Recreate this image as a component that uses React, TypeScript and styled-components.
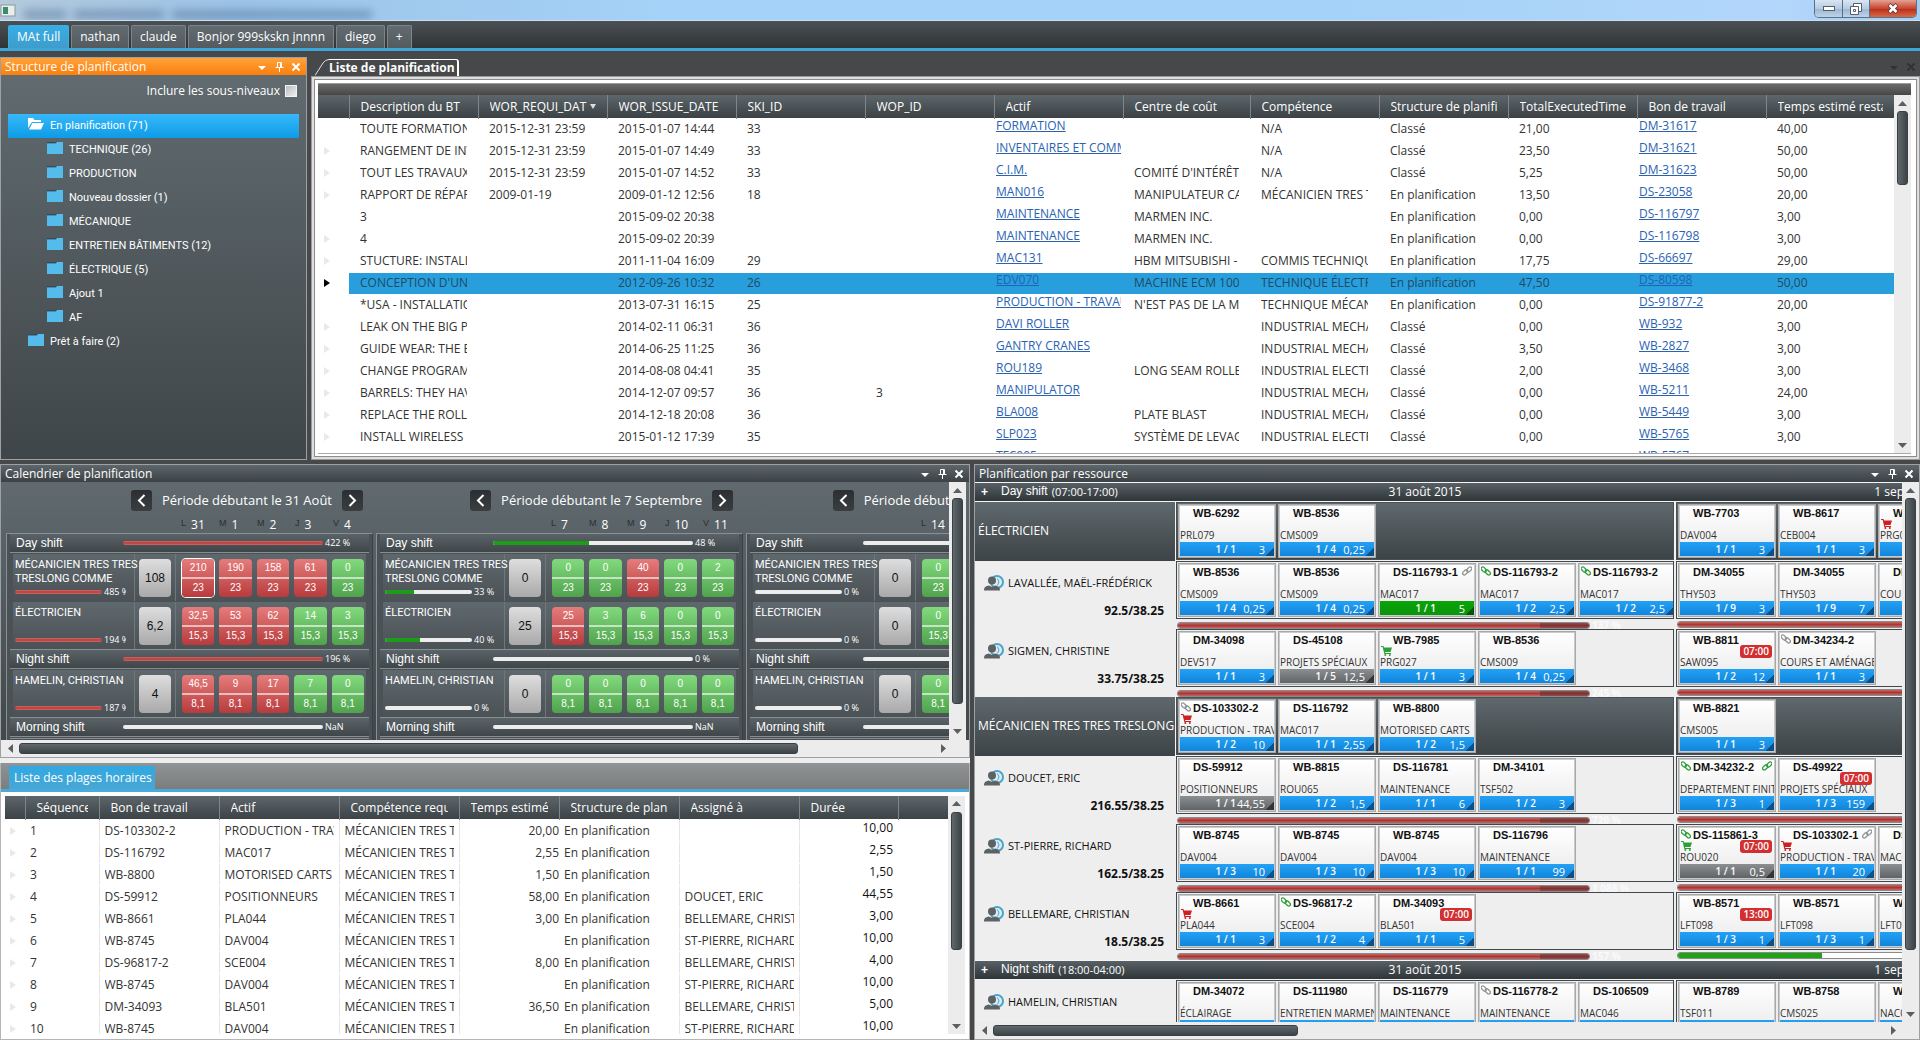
import React from "react";
import styled, { createGlobalStyle, css } from "styled-components";

const ui = `"Open Sans", "Noto Sans", sans-serif`;
const arial = `"Liberation Sans", Arial, sans-serif`;
const compact = `Roboto, "Liberation Sans", sans-serif`;
const steel = "linear-gradient(#5d666b, #3b4144)";
const steelDeep = "linear-gradient(#586166, #2f3538)";

const Global = createGlobalStyle`
  *, *::before, *::after { box-sizing: border-box; }
  body { margin: 0; background: #464849; font: 12px/16px ${ui}; color: #333; }
  button { font: inherit; color: inherit; border: 0; padding: 0; background: none; }
  h1, h2, p, ul { margin: 0; padding: 0; font: inherit; }
  ul { list-style: none; }
`;

const Page = styled.div`
  display: flex;
  flex-direction: column;
  height: 100vh;
  overflow: hidden;
`;

/* ---------- window chrome ---------- */

const TitleBar = styled.header`
  flex: none;
  display: flex;
  align-items: flex-start;
  gap: 8px;
  height: 21px;
  padding-right: 3px;
  overflow: hidden;
  background: linear-gradient(90deg, #b4c9dc 0, #9cc3e6 12%, #a5d2f8 35%, #a5d2f8 70%, #b3d6fb 93%, #a4cdf3 100%);
  border-bottom: 1px solid #c9dff0;
`;
const Haze = styled.i<{ $w: number }>`
  width: ${(p) => p.$w}px;
  height: 9px;
  margin-top: 10px;
  background: #44658c;
  opacity: 0.45;
  filter: blur(4px);
`;
const WindowButtons = styled.div`
  display: flex;
  height: 18px;
  margin-left: auto;
  border: 1px solid #5d6f84;
  border-top: 0;
  border-radius: 0 0 5px 5px;
  overflow: hidden;
`;
const WindowButton = styled.button<{ $close?: boolean }>`
  display: grid;
  place-items: center;
  width: ${(p) => (p.$close ? 47 : 27)}px;
  background: ${(p) =>
    p.$close ? "linear-gradient(#e3a294, #c9452e 50%, #b9311b 55%, #d8694c)" : "linear-gradient(#d9e6f3, #b4cbe2 50%, #9db8d4 55%, #bcd3ea)"};
  & + & { border-left: 1px solid #5d6f84; }
`;

const WorkTabs = styled.nav`
  flex: none;
  display: flex;
  align-items: flex-end;
  gap: 2px;
  height: 30px;
  padding-left: 8px;
  background: linear-gradient(#4a5054, #303436);
  border-bottom: 3px solid #3ea6d6;
`;
const WorkTab = styled.button<{ $active?: boolean }>`
  height: 23px;
  padding: 0 8px;
  color: #fff;
  border: 1px solid ${(p) => (p.$active ? "#37b0e6" : "#7d8589")};
  border-bottom: 0;
  border-radius: 2px 2px 0 0;
  background: ${(p) => (p.$active ? "linear-gradient(#37aee6, #3f9ccb)" : "linear-gradient(#626b70, #535b5f)")};
`;

/* ---------- docking frame ---------- */

const Dock = styled.main`
  flex: 1;
  min-height: 0;
  display: grid;
  grid-template-rows: minmax(0, 403fr) minmax(0, 576fr);
  gap: 4px;
  padding-top: 6px;
`;
const TopRow = styled.div`
  display: grid;
  grid-template-columns: 307px minmax(0, 1fr);
  gap: 4px;
  min-height: 0;
`;
const BottomRow = styled.div`
  display: grid;
  grid-template-columns: minmax(0, 970fr) minmax(0, 946fr);
  gap: 4px;
  min-height: 0;
`;
const Column = styled.div`
  display: flex;
  flex-direction: column;
  min-height: 0;
  background: #eee;
`;
const Panel = styled.section<{ $light?: boolean }>`
  display: flex;
  flex-direction: column;
  min-height: 0;
  min-width: 0;
  border: 1px solid #9da1a3;
  background: ${(p) => (p.$light ? "#eee" : "linear-gradient(#626c71, #3f4649)")};
`;
const PanelTitle = styled.header<{ $active?: boolean }>`
  flex: none;
  display: flex;
  align-items: center;
  height: 17px;
  padding: 0 5px 0 4px;
  color: #fff;
  background: ${(p) => (p.$active ? "linear-gradient(#ffa23c, #fb7f0b)" : steel)};
`;
const PanelTools = styled.div`
  display: flex;
  align-items: center;
  gap: 7px;
  margin-left: auto;
`;
const Tool = styled.button<{ $dim?: boolean }>`
  display: grid;
  place-items: center;
  width: 10px;
  height: 14px;
  color: ${(p) => (p.$dim ? "#303334" : "#fff")};
`;

const DownIcon = () => (
  <svg width="10" height="10" viewBox="0 0 10 10" aria-hidden="true"><path d="M1 4h8L5 8z" fill="currentColor" /></svg>
);
const PinIcon = () => (
  <svg width="9" height="12" viewBox="0 0 9 12" fill="none" stroke="currentColor" aria-hidden="true">
    <path d="M2.500 6.500V1.500h4v5M5.500 1.500v5M.5 6.500h8M4.500 6.500V11" />
  </svg>
);
const CrossIcon = () => (
  <svg width="10" height="10" viewBox="0 0 10 10" stroke="currentColor" strokeWidth="2" aria-hidden="true">
    <path d="M1.500 1.500l7 7M8.500 1.500l-7 7" />
  </svg>
);

const Tools = () => (
  <PanelTools>
    <Tool aria-label="Options"><DownIcon /></Tool>
    <Tool aria-label="Épingler"><PinIcon /></Tool>
    <Tool aria-label="Fermer"><CrossIcon /></Tool>
  </PanelTools>
);

/* ---------- scrollbars ---------- */

const Bar = styled.div<{ $across?: boolean }>`
  flex: none;
  display: flex;
  flex-direction: ${(p) => (p.$across ? "row" : "column")};
  ${(p) => (p.$across ? "height: 17px; gap: 3px; padding: 3px 20px 3px 4px;" : "width: 17px; padding: 0 3px;")}
  background: #ececec;
`;
const BarArrow = styled.button<{ $dir: number }>`
  flex: none;
  display: grid;
  place-items: center;
  align-self: center;
  width: 11px;
  height: 16px;
  color: #5b5f61;
  svg { transform: rotate(${(p) => p.$dir}deg); }
`;
const Thumb = styled.div<{ $size: number; $across?: boolean }>`
  flex: ${(p) => p.$size} 1 0;
  border: 1px solid #3a4043;
  border-radius: 3px;
  background: linear-gradient(${(p) => (p.$across ? "180deg" : "90deg")}, #5f686c, #3d4447);
`;
const Rest = styled.div<{ $size: number }>`
  flex: ${(p) => p.$size} 1 0;
`;
const ArrowHead = () => (
  <svg width="9" height="5" viewBox="0 0 9 5" aria-hidden="true"><path d="M0 5L4.500 0 9 5z" fill="currentColor" /></svg>
);
const Scroll = ({ size, rest, across }: { size: number; rest: number; across?: boolean }) => (
  <Bar $across={across}>
    <BarArrow $dir={across ? -90 : 0} aria-label="Reculer"><ArrowHead /></BarArrow>
    <Thumb $size={size} $across={across} />
    <Rest $size={rest} />
    <BarArrow $dir={across ? 90 : 180} aria-label="Avancer"><ArrowHead /></BarArrow>
  </Bar>
);

/* ---------- folder tree ---------- */

const SubLevels = styled.label`
  display: flex;
  justify-content: flex-end;
  align-items: center;
  gap: 5px;
  height: 32px;
  margin-bottom: 7px;
  padding-right: 9px;
  color: #fff;
`;
const Check = styled.input`
  appearance: none;
  width: 12px;
  height: 12px;
  margin: 0;
  border: 1px solid #f4f4f4;
  background: linear-gradient(135deg, #b9bdbf, #f0f0f0);
`;
const Tree = styled.ul`
  padding: 0 7px;
  font: 11px/24px ${compact};
  color: #fff;
`;
const Node = styled.li<{ $level: number; $open?: boolean }>`
  display: flex;
  align-items: center;
  gap: 6px;
  height: 24px;
  padding-left: ${(p) => 1 + p.$level * 19}px;
  ${(p) => p.$open && css`background: linear-gradient(#38b8fb, #0d9ce6);`}
  svg { margin-bottom: 5px; }
`;
const Folder = () => (
  <svg width="16" height="13" viewBox="0 0 16 13" aria-hidden="true">
    <path d="M0 2.500h9l1-1.500h6v12H0z" fill="#53bcec" />
    <path d="M0 1.500h8l1-1" stroke="#2c4b5c" fill="none" />
  </svg>
);
const OpenFolder = () => (
  <svg width="16" height="13" viewBox="0 0 16 13" fill="#fff" aria-hidden="true">
    <path d="M0 11V1h5l1.500 2H13v2H4z" />
    <path d="M4.500 6H16l-3 6.500H1z" />
  </svg>
);

const nodes: [string, number][] = [
  ["En planification (71)", 1], ["TECHNIQUE (26)", 2], ["PRODUCTION", 2], ["Nouveau dossier (1)", 2], ["MÉCANIQUE", 2],
  ["ENTRETIEN BÂTIMENTS (12)", 2], ["ÉLECTRIQUE (5)", 2], ["Ajout 1", 2], ["AF", 2], ["Prêt à faire (2)", 1],
];

/* ---------- data grids ---------- */

const Document = styled.div`
  display: flex;
  flex-direction: column;
  min-width: 0;
  min-height: 0;
`;
const DocTabs = styled.div`
  flex: none;
  display: flex;
  align-items: center;
  height: 19px;
  padding: 0 4px;
`;
const DocTab = styled.button`
  align-self: flex-end;
  display: flex;
  height: 17px;
  color: #fff;
  font-weight: 700;
  line-height: 16px;
  white-space: nowrap;
`;
const DocLabel = styled.span`
  padding-right: 2px;
  border: solid #fff;
  border-width: 1px 2px 0 0;
  border-radius: 0 3px 0 0;
`;
const Frame = styled.div`
  flex: 1;
  min-height: 0;
  display: flex;
  padding: 2px;
  border: 1px solid #9b9b9b;
  background: #dedede;
`;
const InnerFrame = styled.div`
  flex: 1;
  min-width: 0;
  display: flex;
  flex-direction: column;
  border: 1px solid #8c8c8c;
  background: #fff;
  padding: 3px 5px 2px 3px;
`;
const GroupStrip = styled.div`
  flex: none;
  height: 12px;
  border-top: 1px solid #999;
  background: linear-gradient(#6b6b6b, #474747);
`;
const GridArea = styled.div`
  flex: 1;
  min-height: 0;
  display: flex;
  border-bottom: 1px solid #aaa;
`;
const Viewport = styled.div`
  flex: 1;
  min-width: 0;
  overflow: hidden;
`;
const Grid = styled.table`
  width: 100%;
  table-layout: fixed;
  border-collapse: collapse;
`;
const Head = styled.th<{ $h: number }>`
  height: ${(p) => p.$h}px;
  padding: 1px 11px 0;
  color: #fff;
  font-weight: 400;
  text-align: left;
  & + & { border-left: 1px solid #7d868a; }
`;
const HeadRow = styled.tr`
  background: ${steel};
`;
const Row = styled.tr<{ $on?: boolean }>`
  ${(p) => p.$on && css`td:not(:first-child) { background: #289fdc; color: #1e4a63; } a { color: #1f64b5; }`}
`;
const Cell = styled.td<{ $pad?: number; $lined?: boolean; $right?: boolean; $raised?: boolean }>`
  height: 22px;
  padding: 0 ${(p) => p.$pad ?? 11}px ${(p) => (p.$raised ? 6 : 0)}px;
  border: solid #fff;
  border-width: 1px 0;
  ${(p) => p.$lined && css`border-right: 1px solid #e3e5e6;`}
  ${(p) => p.$right && css`text-align: right;`}
  ${(p) => p.$raised && css`color: #111; line-height: 14px;`}
`;
const Clip = styled.div`
  overflow: hidden;
  white-space: nowrap;
`;
const HeadClip = styled(Clip)`
  display: flex;
  justify-content: space-between;
  align-items: center;
`;
const CellLink = styled.a`
  display: block;
  overflow: hidden;
  white-space: nowrap;
  color: #2a62b4;
`;
const Marker = styled.i<{ $on?: boolean }>`
  display: block;
  width: 0;
  border: solid transparent;
  border-width: 4px 0 4px 6px;
  border-left-color: ${(p) => (p.$on ? "#000" : "#e9e9e9")};
`;

const mainCols = [31, 129, 129, 129, 129, 129, 129, 127, 129, 129, 129, 129, 128];
const mainHeads = ["Description du BT", "WOR_REQUI_DAT", "WOR_ISSUE_DATE", "SKI_ID", "WOP_ID", "Actif", "Centre de coût",
  "Compétence", "Structure de planification", "TotalExecutedTimeHours", "Bon de travail", "Temps estimé restant"];
const EP = "En planification";
const mainRows = [
  ["TOUTE FORMATION", "2015-12-31 23:59", "2015-01-07 14:44", "33", "", "FORMATION", "", "N/A", "Classé", "21,00", "DM-31617", "40,00"],
  ["RANGEMENT DE INVENTAIRE", "2015-12-31 23:59", "2015-01-07 14:49", "33", "", "INVENTAIRES ET COMMANDES", "", "N/A", "Classé", "23,50", "DM-31621", "50,00"],
  ["TOUT LES TRAVAUX", "2015-12-31 23:59", "2015-01-07 14:52", "33", "", "C.I.M.", "COMITÉ D'INTÉRÊT", "N/A", "Classé", "5,25", "DM-31623", "50,00"],
  ["RAPPORT DE RÉPARATION", "2009-01-19", "2009-01-12 12:56", "18", "", "MAN016", "MANIPULATEUR CAMION", "MÉCANICIEN TRES TRES", EP, "13,50", "DS-23058", "20,00"],
  ["3", "", "2015-09-02 20:38", "", "", "MAINTENANCE", "MARMEN INC.", "", EP, "0,00", "DS-116797", "3,00"],
  ["4", "", "2015-09-02 20:39", "", "", "MAINTENANCE", "MARMEN INC.", "", EP, "0,00", "DS-116798", "3,00"],
  ["STUCTURE: INSTALLATION", "", "2011-11-04 16:09", "29", "", "MAC131", "HBM MITSUBISHI -", "COMMIS TECHNIQUE", EP, "17,75", "DS-66697", "29,00"],
  ["CONCEPTION D'UN", "", "2012-09-26 10:32", "26", "", "EDV070", "MACHINE ECM 100'", "TECHNIQUE ÉLECTRIQUE", EP, "47,50", "DS-80598", "50,00"],
  ["*USA - INSTALLATION", "", "2013-07-31 16:15", "25", "", "PRODUCTION - TRAVAUX", "N'EST PAS DE LA MAINT", "TECHNIQUE MÉCANIQUE", EP, "0,00", "DS-91877-2", "20,00"],
  ["LEAK ON THE BIG PUMP", "", "2014-02-11 06:31", "36", "", "DAVI ROLLER", "", "INDUSTRIAL MECHANIC", "Classé", "0,00", "WB-932", "3,00"],
  ["GUIDE WEAR: THE END", "", "2014-06-25 11:25", "36", "", "GANTRY CRANES", "", "INDUSTRIAL MECHANIC", "Classé", "3,50", "WB-2827", "3,00"],
  ["CHANGE PROGRAM", "", "2014-08-08 04:41", "35", "", "ROU189", "LONG SEAM ROLLER", "INDUSTRIAL ELECTRIC", "Classé", "2,00", "WB-3468", "3,00"],
  ["BARRELS: THEY HAVE", "", "2014-12-07 09:57", "36", "3", "MANIPULATOR", "", "INDUSTRIAL MECHANIC", "Classé", "0,00", "WB-5211", "24,00"],
  ["REPLACE THE ROLLER", "", "2014-12-18 20:08", "36", "", "BLA008", "PLATE BLAST", "INDUSTRIAL MECHANIC", "Classé", "0,00", "WB-5449", "3,00"],
  ["INSTALL WIRELESS REMOTE", "", "2015-01-12 17:39", "35", "", "SLP023", "SYSTÈME DE LEVAGE", "INDUSTRIAL ELECTRIC", "Classé", "0,00", "WB-5765", "3,00"],
  ["", "", "", "", "", "TFC005", "", "", "", "", "WB-5767", ""],
];

const WorkOrders = () => (
  <Document>
    <DocTabs>
      <DocTab>
        <svg width="14" height="17" viewBox="0 0 14 17" fill="none" stroke="#ddd" aria-hidden="true"><path d="M0 16.500L8 4Q10.500.5 14 .5" /></svg>
        <DocLabel>Liste de planification</DocLabel>
      </DocTab>
      <PanelTools>
        <Tool $dim aria-label="Options"><DownIcon /></Tool>
        <Tool $dim aria-label="Fermer"><CrossIcon /></Tool>
      </PanelTools>
    </DocTabs>
    <Frame>
      <InnerFrame>
        <GroupStrip />
        <GridArea>
          <Viewport>
            <Grid>
              <colgroup>{mainCols.map((w, i) => <col key={i} style={{ width: w }} />)}</colgroup>
              <thead>
                <HeadRow>
                  <Head $h={23} aria-label="Sélection" />
                  {mainHeads.map((h, i) => (
                    <Head $h={23} key={h}>
                      <HeadClip>
                        {h}
                        {i === 1 && <svg width="6" height="5" viewBox="0 0 6 5" aria-hidden="true"><path d="M0 0h6L3 5z" fill="#ddd" /></svg>}
                      </HeadClip>
                    </Head>
                  ))}
                </HeadRow>
              </thead>
              <tbody>
                {mainRows.map((r, n) => (
                  <Row key={n} $on={n === 7}>
                    <Cell $pad={6}>{![0, 4, 8, 15].includes(n) && <Marker $on={n === 7} />}</Cell>
                    {r.map((t, i) =>
                      i === 5 || i === 10 ? (
                        <Cell key={i} $pad={2} $raised><CellLink href="#bt">{t}</CellLink></Cell>
                      ) : (
                        <Cell key={i}><Clip>{t}</Clip></Cell>
                      )
                    )}
                  </Row>
                ))}
              </tbody>
            </Grid>
          </Viewport>
          <Scroll size={72} rest={254} />
        </GridArea>
      </InnerFrame>
    </Frame>
  </Document>
);

const slotCols = [20, 74, 120, 120, 120, 100, 120, 120, 99, 50];
const slotHeads = ["Séquence", "Bon de travail", "Actif", "Compétence requise", "Temps estimé", "Structure de planification", "Assigné à", "Durée", ""];
const slotRows = [
  ["DS-103302-2", "PRODUCTION - TRAVAUX", "20,00", "", "10,00"],
  ["DS-116792", "MAC017", "2,55", "", "2,55"],
  ["WB-8800", "MOTORISED CARTS", "1,50", "", "1,50"],
  ["DS-59912", "POSITIONNEURS", "58,00", "DOUCET, ERIC", "44,55"],
  ["WB-8661", "PLA044", "3,00", "BELLEMARE, CHRISTIAN", "3,00"],
  ["WB-8745", "DAV004", "", "ST-PIERRE, RICHARD", "10,00"],
  ["DS-96817-2", "SCE004", "8,00", "BELLEMARE, CHRISTIAN", "4,00"],
  ["WB-8745", "DAV004", "", "ST-PIERRE, RICHARD", "10,00"],
  ["DM-34093", "BLA501", "36,50", "BELLEMARE, CHRISTIAN", "5,00"],
  ["WB-8745", "DAV004", "", "ST-PIERRE, RICHARD", "10,00"],
];
const SlotPanel = styled.section`
  flex: 1;
  min-height: 0;
  display: flex;
  flex-direction: column;
  margin-top: 5px;
  border: solid #b5b5b5;
  border-width: 0 1px 1px;
  background: #fff;
`;
const SlotTabs = styled.div`
  flex: none;
  height: 29px;
  padding: 3px 8px 0;
  background: linear-gradient(#8f9496, #7c7c7c);
  border-bottom: 3px solid #46acd9;
`;
const SlotTab = styled.button`
  height: 23px;
  padding: 1px 3px 0 5px;
  color: #fff;
  border-radius: 2px 2px 0 0;
  background: linear-gradient(#2fa9e2, #48a6d4);
`;
const SlotBody = styled.div`
  flex: 1;
  min-height: 0;
  display: flex;
  padding: 4px 4px 5px;
`;

const TimeSlots = () => (
  <SlotPanel>
    <SlotTabs><SlotTab>Liste des plages horaires</SlotTab></SlotTabs>
    <SlotBody>
      <Viewport>
        <Grid>
          <colgroup>{slotCols.map((w, i) => <col key={i} style={{ width: w }} />)}</colgroup>
          <thead>
            <HeadRow>
              <Head $h={24} aria-label="Sélection" />
              {slotHeads.map((h) => <Head $h={24} key={h}><HeadClip>{h}</HeadClip></Head>)}
            </HeadRow>
          </thead>
          <tbody>
            {slotRows.map(([bt, actif, temps, who, duree], n) => (
              <Row key={n}>
                <Cell $pad={5}><Marker /></Cell>
                <Cell $pad={5} $lined><Clip>{n + 1}</Clip></Cell>
                <Cell $pad={5} $lined><Clip>{bt}</Clip></Cell>
                <Cell $pad={5} $lined><Clip>{actif}</Clip></Cell>
                <Cell $pad={5} $lined><Clip>MÉCANICIEN TRES TRES</Clip></Cell>
                <Cell $pad={0} $right><Clip>{temps}</Clip></Cell>
                <Cell $pad={5} $lined><Clip>En planification</Clip></Cell>
                <Cell $pad={5} $lined><Clip>{who}</Clip></Cell>
                <Cell $pad={5} $right $raised><Clip>{duree}</Clip></Cell>
                <Cell />
              </Row>
            ))}
          </tbody>
        </Grid>
      </Viewport>
      <Scroll size={137} rest={69} />
    </SlotBody>
  </SlotPanel>
);

/* ---------- planning calendar ---------- */

const CalendarPanel = styled(Panel)`
  flex: none;
  height: 51%;
`;
const CalendarBody = styled.div`
  flex: 1;
  min-height: 0;
  display: flex;
  padding-right: 3px;
`;
const Weeks = styled.div`
  flex: 1;
  min-width: 0;
  display: flex;
  gap: 3px;
  padding-left: 5px;
  overflow: hidden;
`;
const Week = styled.section`
  flex: none;
  width: 367px;
`;
const Period = styled.div`
  display: flex;
  justify-content: flex-end;
  align-items: center;
  gap: 10px;
  height: 36px;
  padding: 0 10px;
  color: #fff;
`;
const PeriodTitle = styled.h2`
  font-size: 13px;
  line-height: 20px;
`;
const PeriodButton = styled.button`
  display: grid;
  place-items: center;
  width: 21px;
  height: 21px;
  border-radius: 3px;
  background: linear-gradient(#2b2f31, #3a3e40);
`;
const Chevron = ({ right }: { right?: boolean }) => (
  <svg width="9" height="13" viewBox="0 0 9 13" fill="none" stroke="#fff" strokeWidth="2" aria-hidden="true">
    <path d={right ? "M1.500 1l5.500 5.500-5.500 5.500" : "M7.500 1L2 6.500 7.500 12"} />
  </svg>
);
const DayNames = styled.div`
  display: grid;
  grid-template-columns: repeat(5, 1fr);
  gap: 5px;
  height: 15px;
  margin: 0 7px 0 175px;
`;
const DayName = styled.div`
  display: flex;
  gap: 5px;
  color: #fff;
  font: 12px/14px ${ui};
  small { font: 9px/10px ${arial}; color: #2b2f31; }
`;
const Shifts = styled.div`
  height: 300px;
  padding: 0 3px;
  border: 1px solid #899094;
  border-right-color: #3a4043;
  background: #4a5256;
`;
const ShiftHead = styled.div`
  display: grid;
  grid-template-columns: 105px 200px 1fr;
  align-items: center;
  gap: 2px;
  height: 18px;
  padding-left: 6px;
  color: #fff;
  font: 12px/16px ${arial};
  background: linear-gradient(#5a6368, #3f4649);
`;
const ShiftBody = styled.div`
  padding: 1px 3px 0;
  border: solid #878e92;
  border-width: 1px 0;
`;
const Skill = styled.div`
  display: grid;
  grid-template-columns: 122px 41px 1fr;
  height: 47px;
  background: linear-gradient(#5f686d, #4b5256);
  & + & { margin-top: 1px; }
`;
const SkillInfo = styled.div`
  display: flex;
  flex-direction: column;
  padding: 4px 8px 3px 2px;
  border-right: 1px solid #6f777b;
  color: #fff;
  font: 11px/14px ${compact};
`;
const SkillName = styled.span`
  flex: 1;
  white-space: pre;
`;
const Gauge = styled.div`
  display: grid;
  grid-template-columns: 87px 1fr;
  align-items: center;
  gap: 2px;
  height: 12px;
  overflow: hidden;
`;
const Percent = styled.span`
  overflow: hidden;
  white-space: nowrap;
  font: 9px/12px ${ui};
  color: #fff;
`;
const Track = styled.div`
  height: 4px;
  border-radius: 2px;
  overflow: hidden;
  background: #ececec;
`;
const Fill = styled.div<{ $over: boolean }>`
  height: 100%;
  background: ${(p) => (p.$over ? "linear-gradient(#d06a68, #b73c3a, #d06a68)" : "#1c9c18")};
`;
const Load = styled.div`
  display: grid;
  place-items: center;
  border-right: 1px solid #6f777b;
`;
const LoadBox = styled.div`
  width: 32px;
  height: 38px;
  border-radius: 4px;
  background: linear-gradient(#dedede, #a9a9a9);
  color: #111;
  font: 12px/38px ${arial};
  text-align: center;
`;
const Cells = styled.div`
  display: grid;
  grid-template-columns: repeat(5, 1fr);
  align-items: center;
  gap: 5px;
  padding: 0 2px 0 6px;
`;
const DayCell = styled.button<{ $over: boolean; $on?: boolean }>`
  display: grid;
  grid-template-rows: 1fr 1fr;
  height: 38px;
  border-radius: 4px;
  color: #fff;
  font: 10px/18px ${arial};
  background: ${(p) => (p.$over ? "linear-gradient(#e57c7b, #b83b3d)" : "linear-gradient(#82d97d, #50a34d)")};
  ${(p) => p.$on && css`box-shadow: 0 0 0 1px #fff;`}
  span + span { border-top: 2px solid rgba(255, 255, 255, 0.6); }
`;

type SkillData = [string, number, string, number[], string];
type WeekData = { title: string; days: number[]; shifts: [string, string][]; skills: SkillData[] };
const names = ["MÉCANICIEN TRES TRES\nTRESLONG COMME", "ÉLECTRICIEN", "HAMELIN, CHRISTIAN"];
const weeks: WeekData[] = [
  {
    title: "31 Août", days: [31, 1, 2, 3, 4], shifts: [["Day shift", "422 %"], ["Night shift", "196 %"], ["Morning shift", "NaN"]],
    skills: [[names[0], 485, "108", [210, 190, 158, 61, 0], "23"], [names[1], 194, "6,2", [32.5, 53, 62, 14, 3], "15,3"], [names[2], 187, "4", [46.5, 9, 17, 7, 0], "8,1"]],
  },
  {
    title: "7 Septembre", days: [7, 8, 9, 10, 11], shifts: [["Day shift", "48 %"], ["Night shift", "0 %"], ["Morning shift", "NaN"]],
    skills: [[names[0], 33, "0", [0, 0, 40, 0, 2], "23"], [names[1], 40, "25", [25, 3, 6, 0, 0], "15,3"], [names[2], 0, "0", [0, 0, 0, 0, 0], "8,1"]],
  },
  {
    title: "14 Septembre", days: [14, 15, 16, 17, 18], shifts: [["Day shift", "0 %"], ["Night shift", "0 %"], ["Morning shift", "NaN"]],
    skills: [[names[0], 0, "0", [0, 0, 0, 0, 0], "23"], [names[1], 0, "0", [0, 0, 0, 0, 0], "15,3"], [names[2], 0, "0", [0, 0, 0, 0, 0], "8,1"]],
  },
];
const Meter = ({ value }: { value: number }) => (
  <Track><Fill $over={value > 100} style={{ width: `${Math.min(value, 100)}%` }} /></Track>
);
const toNumber = (s: string) => parseFloat(s.replace(",", ".")) || 0;

const ShiftBlock = ({ shift, skills, first }: { shift: [string, string]; skills: SkillData[]; first?: boolean }) => (
  <>
    <ShiftHead>
      {shift[0]}
      <Meter value={toNumber(shift[1])} />
      <Percent>{shift[1]}</Percent>
    </ShiftHead>
    <ShiftBody>
      {skills.map(([name, pct, load, values, cap], n) => (
        <Skill key={name}>
          <SkillInfo>
            <SkillName>{name}</SkillName>
            <Gauge><Meter value={pct} /><Percent>{pct} %</Percent></Gauge>
          </SkillInfo>
          <Load><LoadBox>{load}</LoadBox></Load>
          <Cells>
            {values.map((v, i) => (
              <DayCell key={i} $over={v > toNumber(cap)} $on={first && n === 0 && i === 0}>
                <span>{String(v).replace(".", ",")}</span>
                <span>{cap}</span>
              </DayCell>
            ))}
          </Cells>
        </Skill>
      ))}
    </ShiftBody>
  </>
);

const Calendar = () => (
  <CalendarPanel>
    <PanelTitle><h2>Calendrier de planification</h2><Tools /></PanelTitle>
    <CalendarBody>
      <Weeks>
        {weeks.map((w, k) => (
          <Week key={w.title}>
            <Period>
              <PeriodButton aria-label="Période précédente"><Chevron /></PeriodButton>
              <PeriodTitle>Période débutant le {w.title}</PeriodTitle>
              <PeriodButton aria-label="Période suivante"><Chevron right /></PeriodButton>
            </Period>
            <DayNames>
              {w.days.map((d, i) => <DayName key={d}><small>{"LMMJV"[i]}</small>{d}</DayName>)}
            </DayNames>
            <Shifts>
              <ShiftBlock shift={w.shifts[0]} skills={w.skills.slice(0, 2)} first={k === 0} />
              <ShiftBlock shift={w.shifts[1]} skills={w.skills.slice(2)} />
              <ShiftBlock shift={w.shifts[2]} skills={[]} />
            </Shifts>
          </Week>
        ))}
      </Weeks>
      <Scroll size={202} rest={20} />
    </CalendarBody>
    <Scroll across size={780} rest={135} />
  </CalendarPanel>
);

/* ---------- resource planning ---------- */

const ResourceBody = styled.div`
  flex: 1;
  min-height: 0;
  display: flex;
`;
const Lanes = styled.div`
  flex: 1;
  min-width: 0;
  overflow: hidden;
`;
const ShiftBar = styled.div`
  display: grid;
  grid-template-columns: 201px 1fr;
  height: 20px;
  border: solid #f4f4f4;
  border-width: 1px 0;
  background: ${steelDeep};
  color: #fff;
  line-height: 18px;
`;
const ShiftTitle = styled.div`
  display: flex;
  gap: 14px;
  padding-left: 6px;
  font: 12px/17px ${arial};
  small { font: 11px/17px ${ui}; margin-left: -10px; }
`;
const Expand = styled.button`
  width: 6px;
  font: 700 12px/17px ${arial};
`;
const Days = styled.div`
  display: flex;
  gap: 2px;
  overflow: hidden;
`;
const DayTitle = styled.div`
  flex: none;
  width: 498px;
  text-align: center;
`;
const Lane = styled.div<{ $group?: boolean }>`
  display: grid;
  grid-template-columns: 200px 1fr;
  gap: 1px;
  height: ${(p) => (p.$group ? 59 : 68)}px;
  background: ${(p) => (p.$group ? "#f4f4f4" : "#eee")};
`;
const GroupName = styled.div`
  padding-left: 3px;
  overflow: hidden;
  white-space: nowrap;
  color: #fff;
  line-height: 58px;
  background: linear-gradient(#5f686d, #3d4447);
`;
const Person = styled.div`
  display: flex;
  flex-direction: column;
  gap: 10px;
  padding: 12px 11px 0 9px;
  color: #111;
`;
const PersonName = styled.div`
  display: flex;
  align-items: center;
  gap: 4px;
  height: 20px;
  font-size: 11px;
  white-space: nowrap;
`;
const Total = styled.strong`
  align-self: flex-end;
  font-size: 12px;
`;
const PersonIcon = () => (
  <svg width="20" height="16" viewBox="0 0 20 16" aria-hidden="true">
    <circle cx="13" cy="7" r="6" fill="#dcecf3" stroke="#4ba3c7" strokeWidth="2" />
    <path d="M13.500 3.500q3 3.500 0 7" fill="none" stroke="#4ba3c7" />
    <circle cx="8" cy="5.500" r="4" fill="#5d6163" />
    <path d="M0 15.500c0-4 2.500-4.500 5-5l3 1.500 3-1.500c3 .5 5 1.500 5 5z" fill="#5d6163" />
  </svg>
);
const DaySlot = styled.div`
  flex: none;
  display: flex;
  flex-direction: column;
  gap: 2px;
  width: 498px;
`;
const CardRow = styled.div<{ $group?: boolean }>`
  display: flex;
  gap: 2px;
  height: 58px;
  padding: 1px;
  overflow: hidden;
  border: 1px solid ${(p) => (p.$group ? "#4a5154" : "#41474b")};
  background: ${(p) => (p.$group ? "linear-gradient(#5f686d, #3d4447)" : "#eee")};
`;
const Usage = styled.div`
  display: grid;
  grid-template-columns: 413px 1fr;
  align-items: center;
  gap: 2px;
  height: 7px;
  padding-left: 1px;
  color: #fafafa;
  font: 700 10px/8px ${ui};
`;
const UsageTrack = styled.div`
  height: 7px;
  border: 1px solid #8b8b8b;
  border-radius: 3px;
  overflow: hidden;
  background: #fff;
`;
const UsageFill = styled.div<{ $over: boolean }>`
  height: 100%;
  background: ${(p) =>
    p.$over
      ? "linear-gradient(90deg, transparent 88%, rgba(70, 40, 40, 0.4) 88%), linear-gradient(#c66664, #a93735, #c66664)"
      : "#1ea317"};
`;
const CardBox = styled.article`
  position: relative;
  flex: none;
  display: flex;
  flex-direction: column;
  width: 98px;
  height: 54px;
  border: 1px solid #a6a8aa;
  outline: 1px solid #c9caca;
  outline-offset: -2px;
  background: linear-gradient(#fff, #e9e9e9);
  overflow: hidden;
`;
const CardTop = styled.div`
  flex: 1;
  display: grid;
  grid-template-columns: 11px 1fr 11px;
  grid-template-rows: 13px 9px;
  column-gap: 1px;
  padding: 1px 2px 0 2px;
  color: #111;
  font: 700 11px/14px ${arial};
  white-space: nowrap;
`;
const CardTag = styled.p`
  height: 14px;
  padding-left: 1px;
  overflow: hidden;
  white-space: nowrap;
  font-size: 10px;
  line-height: 14px;
`;
const tones = {
  blue: ["linear-gradient(#23a1f5, #0f83da)", "#0b5087"],
  green: ["linear-gradient(#0aa40a, #0a930a)", "#08530a"],
  gray: ["linear-gradient(#8b8f91, #5d6163)", "#333637"],
};
type Tone = keyof typeof tones;
const CardFoot = styled.footer<{ $tone: Tone }>`
  flex: none;
  display: grid;
  grid-template-columns: 1fr 29px;
  align-items: center;
  height: 15px;
  margin: 0 1px;
  padding-right: 9px;
  color: #fff;
  text-align: right;
  font-size: 11px;
  line-height: 15px;
  background: linear-gradient(135deg, transparent calc(100% - 7px), ${(p) => tones[p.$tone][1]} calc(100% - 7px)) no-repeat right / 15px 100%,
    ${(p) => tones[p.$tone][0]};
  small { font-size: 10px; font-weight: 600; }
`;
const Badge = styled.span`
  position: absolute;
  top: 13px;
  right: 3px;
  padding: 0 3px;
  border-radius: 3px;
  background: #d32f31;
  color: #fff;
  font-size: 10px;
  font-weight: 600;
  line-height: 13px;
`;
const LinkIcon = ({ color, flip }: { color: string; flip?: boolean }) => (
  <svg width="10" height="10" viewBox="0 0 10 10" fill="none" stroke={color} aria-hidden="true">
    <g transform={flip ? "translate(10 0) scale(-1 1)" : undefined} strokeWidth="1.300">
      <rect x="-.2" y="2" width="6" height="3.400" rx="1.700" transform="rotate(45 3 3.500)" />
      <rect x="3.800" y="4.900" width="6" height="3.400" rx="1.700" transform="rotate(45 7 6.500)" />
    </g>
  </svg>
);
const CartIcon = ({ color }: { color: string }) => (
  <svg width="11" height="10" viewBox="0 0 11 10" fill={color} aria-hidden="true">
    <path d="M0 0h2.500l.5 1.500h8L9.500 6H4l.3 1H10v1H3.300L1.700 1H0z" />
    <circle cx="4.300" cy="9" r="1" /><circle cx="8.800" cy="9" r="1" />
  </svg>
);

const GREEN = "#2d9e3a", GREY = "#8f9395", RED = "#cf1f22";
type CardData = { id: string; tag: string; part: string; hours: string; tone?: Tone; left?: string; right?: string; cart?: string; at?: string };
const c = (id: string, tag: string, part: string, hours: string, extra: Partial<CardData> = {}): CardData => ({ id, tag, part, hours, ...extra });
type LaneData = { name: string; group?: boolean; total?: string; pct?: string; next?: number; days: [CardData[], CardData[]] };

const dayLanes: LaneData[] = [
  { name: "ÉLECTRICIEN", group: true, days: [
    [c("WB-6292", "PRL079", "1 / 1", "3"), c("WB-8536", "CMS009", "1 / 4", "0,25")],
    [c("WB-7703", "DAV004", "1 / 1", "3"), c("WB-8617", "CEB004", "1 / 1", "3"), c("WB-7985", "PRG027", "1 / 1", "3", { cart: RED })]] },
  { name: "LAVALLÉE, MAËL-FRÉDÉRICK", total: "92.5/38.25", pct: "137 %", days: [
    [c("WB-8536", "CMS009", "1 / 4", "0,25"), c("WB-8536", "CMS009", "1 / 4", "0,25"), c("DS-116793-1", "MAC017", "1 / 1", "5", { tone: "green", right: GREY }),
      c("DS-116793-2", "MAC017", "1 / 2", "2,5", { left: GREEN }), c("DS-116793-2", "MAC017", "1 / 2", "2,5", { left: GREEN })],
    [c("DM-34055", "THY503", "1 / 9", "3"), c("DM-34055", "THY503", "1 / 9", "7"), c("DM-34234", "COURS ET", "1 / 1", "3")]] },
  { name: "SIGMEN, CHRISTINE", total: "33.75/38.25", pct: "245 %", days: [
    [c("DM-34098", "DEV517", "1 / 1", "3"), c("DS-45108", "PROJETS SPÉCIAUX", "1 / 5", "12,5", { tone: "gray" }), c("WB-7985", "PRG027", "1 / 1", "3", { cart: GREEN }), c("WB-8536", "CMS009", "1 / 4", "0,25")],
    [c("WB-8811", "SAW095", "1 / 2", "12", { at: "07:00" }), c("DM-34234-2", "COURS ET AMÉNAGEMENT", "1 / 1", "3", { left: GREY })]] },
  { name: "MÉCANICIEN TRES TRES TRESLONG COMME", group: true, days: [
    [c("DS-103302-2", "PRODUCTION - TRAVAUX", "1 / 2", "10", { left: GREY, cart: RED }), c("DS-116792", "MAC017", "1 / 1", "2,55"), c("WB-8800", "MOTORISED CARTS", "1 / 2", "1,5")],
    [c("WB-8821", "CMS005", "1 / 1", "3")]] },
  { name: "DOUCET, ERIC", total: "216.55/38.25", pct: "720 %", days: [
    [c("DS-59912", "POSITIONNEURS", "1 / 1", "44,55", { tone: "gray" }), c("WB-8815", "ROU065", "1 / 2", "1,5"), c("DS-116781", "MAINTENANCE", "1 / 1", "6"), c("DM-34101", "TSF502", "1 / 2", "3")],
    [c("DM-34232-2", "DEPARTEMENT FINITION", "1 / 3", "1", { left: GREEN, right: GREEN }), c("DS-49922", "PROJETS SPÉCIAUX", "1 / 3", "159", { at: "07:00" })]] },
  { name: "ST-PIERRE, RICHARD", total: "162.5/38.25", pct: "1 088 %", days: [
    [c("WB-8745", "DAV004", "1 / 3", "10"), c("WB-8745", "DAV004", "1 / 3", "10"), c("WB-8745", "DAV004", "1 / 3", "10"), c("DS-116796", "MAINTENANCE", "1 / 1", "99")],
    [c("DS-115861-3", "ROU020", "1 / 1", "0,5", { tone: "gray", left: GREEN, cart: GREEN, at: "07:00" }), c("DS-103302-1", "PRODUCTION - TRAVAUX", "1 / 1", "20", { cart: RED, right: GREY }), c("DS-116792", "MAC017", "1 / 1", "3", { tone: "gray" })]] },
  { name: "BELLEMARE, CHRISTIAN", total: "18.5/38.25", pct: "157 %", next: 35, days: [
    [c("WB-8661", "PLA044", "1 / 1", "3", { cart: RED }), c("DS-96817-2", "SCE004", "1 / 2", "4", { left: GREEN }), c("DM-34093", "BLA501", "1 / 1", "5", { at: "07:00" })],
    [c("WB-8571", "LFT098", "1 / 3", "1", { at: "13:00" }), c("WB-8571", "LFT098", "1 / 3", "1"), c("WB-8571", "LFT098", "1 / 3", "1")]] },
];
const nightLanes: LaneData[] = [
  { name: "HAMELIN, CHRISTIAN", total: "46.5/38.25", pct: "187 %", days: [
    [c("DM-34072", "ÉCLAIRAGE", "1 / 1", "3"), c("DS-111980", "ENTRETIEN MARMEN", "1 / 1", "3"), c("DS-116779", "MAINTENANCE", "1 / 1", "3"), c("DS-116778-2", "MAINTENANCE", "1 / 1", "3", { left: GREY }), c("DS-106509", "MAC046", "1 / 1", "3")],
    [c("WB-8789", "TSF011", "1 / 1", "3"), c("WB-8758", "CMS025", "1 / 1", "3"), c("WB-8760", "NAC001", "1 / 1", "3")]] },
];

const Card = ({ d }: { d: CardData }) => (
  <CardBox>
    <CardTop>
      <span>{d.left && <LinkIcon color={d.left} />}</span>
      <span>{d.id}</span>
      <span>{d.right && <LinkIcon color={d.right} flip />}</span>
      {d.cart && <CartIcon color={d.cart} />}
    </CardTop>
    <CardTag>{d.tag}</CardTag>
    <CardFoot $tone={d.tone ?? "blue"}><small>{d.part}</small><span>{d.hours}</span></CardFoot>
    {d.at && <Badge>{d.at}</Badge>}
  </CardBox>
);

const ShiftLanes = ({ title, hours, lanes }: { title: string; hours: string; lanes: LaneData[] }) => (
  <>
    <ShiftBar>
      <ShiftTitle><Expand aria-label="Développer">+</Expand><span>{title}</span><small>{hours}</small></ShiftTitle>
      <Days><DayTitle>31 août 2015</DayTitle><DayTitle>1 septembre 2015</DayTitle></Days>
    </ShiftBar>
    {lanes.map((l) => (
      <Lane key={l.name} $group={l.group}>
        {l.group ? (
          <GroupName>{l.name}</GroupName>
        ) : (
          <Person>
            <PersonName><PersonIcon />{l.name}</PersonName>
            <Total>{l.total}</Total>
          </Person>
        )}
        <Days>
          {l.days.map((cards, i) => (
            <DaySlot key={i}>
              <CardRow $group={l.group}>{cards.map((d, k) => <Card key={k} d={d} />)}</CardRow>
              {!l.group && (
                <Usage>
                  <UsageTrack>
                    <UsageFill $over={!(i === 1 && l.next)} style={{ width: `${i === 1 && l.next ? l.next : 100}%` }} />
                  </UsageTrack>
                  {i === 0 && l.pct}
                </Usage>
              )}
            </DaySlot>
          ))}
        </Days>
      </Lane>
    ))}
  </>
);

const Resources = () => (
  <Panel $light>
    <PanelTitle><h2>Planification par ressource</h2><Tools /></PanelTitle>
    <ResourceBody>
      <Lanes>
        <ShiftLanes title="Day shift" hours="(07:00-17:00)" lanes={dayLanes} />
        <ShiftLanes title="Night shift" hours="(18:00-04:00)" lanes={nightLanes} />
      </Lanes>
      <Scroll size={451} rest={56} />
    </ResourceBody>
    <Scroll across size={306} rest={589} />
  </Panel>
);

/* ---------- page ---------- */

export default function App() {
  return (
    <Page>
      <Global />
      <TitleBar>
        <svg width="16" height="18" viewBox="0 0 16 18" aria-hidden="true">
          <rect x="1" y="5" width="14" height="11" fill="#e8eeea" stroke="#8b9a97" />
          <rect x="3" y="7" width="5" height="7" fill="#3c8a74" />
        </svg>
        <Haze $w={42} />
        <Haze $w={90} />
        <Haze $w={200} />
        <WindowButtons>
          <WindowButton aria-label="Réduire">
            <svg width="12" height="5" viewBox="0 0 12 5"><rect x=".5" y=".5" width="11" height="4" fill="#fff" stroke="#555f6b" /></svg>
          </WindowButton>
          <WindowButton aria-label="Restaurer">
            <svg width="12" height="12" viewBox="0 0 12 12" fill="#fff" stroke="#555f6b"><path d="M3.500.5h8v8h-8z" /><path d="M.5 3.500h8v8h-8z" /><path d="M3.500 6.500h2v2h-2z" /></svg>
          </WindowButton>
          <WindowButton $close aria-label="Fermer">
            <svg width="12" height="11" viewBox="0 0 12 11"><path d="M2 1.500l8 8M10 1.500l-8 8" stroke="#5c3a38" strokeWidth="4" /><path d="M2.500 2l7 7M9.500 2l-7 7" stroke="#fff" strokeWidth="2.500" /></svg>
          </WindowButton>
        </WindowButtons>
      </TitleBar>
      <WorkTabs>
        {["MAt full", "nathan", "claude", "Bonjor 999skskn jnnnn", "diego", "+"].map((t, i) => <WorkTab key={t} $active={i === 0}>{t}</WorkTab>)}
      </WorkTabs>
      <Dock>
        <TopRow>
          <Panel>
            <PanelTitle $active><h2>Structure de planification</h2><Tools /></PanelTitle>
            <SubLevels>Inclure les sous-niveaux<Check type="checkbox" /></SubLevels>
            <Tree>
              {nodes.map(([t, level], i) => (
                <Node key={t} $level={level} $open={i === 0}>{i === 0 ? <OpenFolder /> : <Folder />}{t}</Node>
              ))}
            </Tree>
          </Panel>
          <WorkOrders />
        </TopRow>
        <BottomRow>
          <Column>
            <Calendar />
            <TimeSlots />
          </Column>
          <Resources />
        </BottomRow>
      </Dock>
    </Page>
  );
}
